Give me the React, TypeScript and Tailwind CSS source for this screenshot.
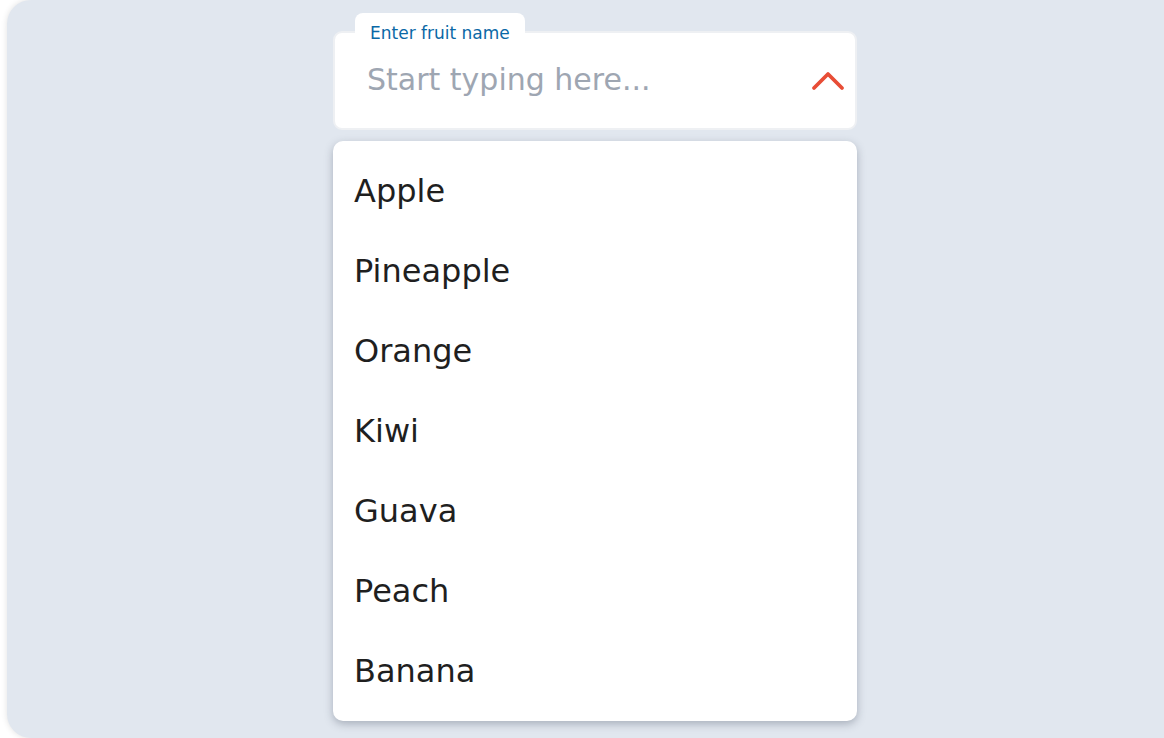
const fruits = ['Apple', 'Pineapple', 'Orange', 'Kiwi', 'Guava', 'Peach', 'Banana'];

const ChevronUp = () => (
  <svg width="34" height="21" viewBox="0 0 34 21" fill="none">
    <path d="M3 18L17 4L31 18" stroke="#e84d36" strokeWidth="3.8" strokeLinecap="round" strokeLinejoin="round" />
  </svg>
);

const App = () => (
  <div className="h-[738px] w-[1164px] overflow-hidden bg-white font-['DejaVu_Sans',sans-serif]">
    <div className="ml-[7px] flex h-[738px] w-[1200px] rounded-[24px] bg-[#e1e7ef] shadow-[0_0_6px_rgba(0,0,0,0.12)]">
      <div className="ml-[326px] flex w-[524px] flex-col pt-[31px]">
        <div className="relative flex h-[99px] items-center rounded-[9px] border-2 border-[#eef0f3] bg-white pl-[32px] pr-[10px]">
          <div className="absolute -top-[20px] left-[20px] h-[30px] rounded-t-[8px] bg-white px-[15px] pt-[11px] text-[17px] leading-[19px] text-[#0a68a6]">
            Enter fruit name
          </div>
          <span className="-mt-[2px] flex-1 text-[30px] text-[#9ea6b2]">Start typing here...</span>
          <ChevronUp />
        </div>
        <ul className="mt-[11px] rounded-[10px] bg-white py-[10px] shadow-[0_3px_8px_rgba(60,70,90,0.35)]">
          {fruits.map((f) => (
            <li key={f} className="flex h-[80px] items-center px-[21px] text-[32px] text-[#1f1f1f]">
              {f}
            </li>
          ))}
        </ul>
      </div>
    </div>
  </div>
);

export default App;
